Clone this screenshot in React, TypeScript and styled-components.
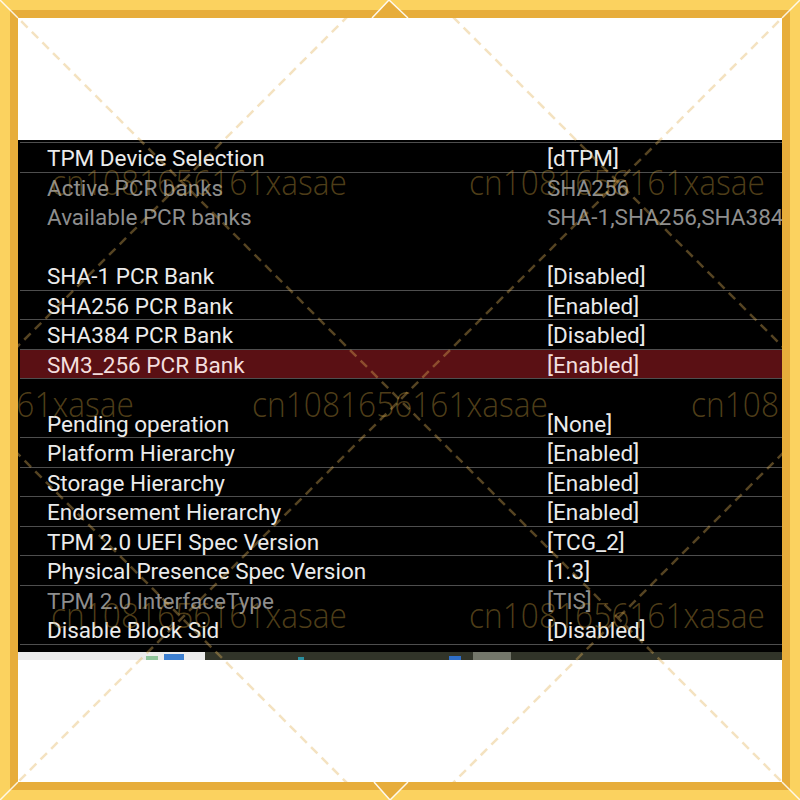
import styled, { createGlobalStyle } from 'styled-components';

type Kind = 'item' | 'info' | 'blank';

interface RowData {
  label?: string;
  value?: string;
  kind: Kind;
  active?: boolean;
}

const rows: RowData[] = [
  { label: 'TPM Device Selection', value: '[dTPM]', kind: 'item' },
  { label: 'Active PCR banks', value: 'SHA256', kind: 'info' },
  { label: 'Available PCR banks', value: 'SHA-1,SHA256,SHA384,SM3_256', kind: 'info' },
  { kind: 'blank' },
  { label: 'SHA-1 PCR Bank', value: '[Disabled]', kind: 'item' },
  { label: 'SHA256 PCR Bank', value: '[Enabled]', kind: 'item' },
  { label: 'SHA384 PCR Bank', value: '[Disabled]', kind: 'item' },
  { label: 'SM3_256 PCR Bank', value: '[Enabled]', kind: 'item', active: true },
  { kind: 'blank' },
  { label: 'Pending operation', value: '[None]', kind: 'item' },
  { label: 'Platform Hierarchy', value: '[Enabled]', kind: 'item' },
  { label: 'Storage Hierarchy', value: '[Enabled]', kind: 'item' },
  { label: 'Endorsement Hierarchy', value: '[Enabled]', kind: 'item' },
  { label: 'TPM 2.0 UEFI Spec Version', value: '[TCG_2]', kind: 'item' },
  { label: 'Physical Presence Spec Version', value: '[1.3]', kind: 'item' },
  { label: 'TPM 2.0 InterfaceType', value: '[TIS]', kind: 'info' },
  { label: 'Disable Block Sid', value: '[Disabled]', kind: 'item' },
];

// watermark text positions [x, baseline]
const marks: [number, number][] = [
  [51, 195],
  [469, 195],
  [-162, 417],
  [252, 417],
  [691, 417],
  [51, 628],
  [469, 628],
];

const GlobalStyle = createGlobalStyle`
  html, body {
    margin: 0;
    padding: 0;
    background: #ffffff;
  }
`;

const Page = styled.div`
  position: relative;
  width: 800px;
  height: 800px;
  overflow: hidden;
`;

const Frame = styled.div`
  width: 800px;
  height: 800px;
  box-sizing: border-box;
  border: 10px solid #fbd25f;
`;

const Inner = styled.div`
  height: 100%;
  box-sizing: border-box;
  border: 8px solid #e7ad3b;
  background: #ffffff;
  display: flex;
  flex-direction: column;
  overflow: hidden;
`;

const TopGap = styled.div`
  height: 122px;
  flex: none;
`;

const Panel = styled.div`
  height: 512px;
  flex: none;
  background: #000000;
  padding-top: 2px;
  box-sizing: border-box;
  font-family: Roboto, 'Liberation Sans', sans-serif;
  font-size: 22.5px;
`;

const List = styled.div`
  margin-left: 2px;
  border-top: 1.5px solid #4e4e4e;
`;

const Row = styled.div<{ $kind: Kind; $active?: boolean }>`
  height: 29.5px;
  box-sizing: border-box;
  display: grid;
  grid-template-columns: 500px 1fr;
  align-items: center;
  padding-left: 27px;
  padding-top: 2px;
  white-space: nowrap;
  overflow: hidden;
  background: ${(p) => (p.$active ? '#5a1014' : 'transparent')};
  border-bottom: 1.5px solid
    ${(p) => (p.$kind === 'item' ? '#4e4e4e' : 'transparent')};
  color: ${(p) => (p.$active ? '#f3dede' : p.$kind === 'info' ? '#8e8e8e' : '#ebebeb')};
`;

const Label = styled.span`
  overflow: hidden;
`;

const Value = styled.span`
  overflow: hidden;
`;

const Strip = styled.div`
  height: 8px;
  flex: none;
  display: flex;
`;

const StripLight = styled.div`
  width: 187px;
  background: #ebebeb;
  display: flex;
  align-items: flex-end;
  padding-left: 128px;
  gap: 6px;
  box-sizing: border-box;
`;

const StripDark = styled.div`
  flex: 1;
  background: #313429;
  display: flex;
  align-items: flex-end;
`;

const Chip = styled.span<{ $color: string; $w: number; $h: number; $ml?: number }>`
  display: block;
  width: ${(p) => p.$w}px;
  height: ${(p) => p.$h}px;
  background: ${(p) => p.$color};
  margin-left: ${(p) => p.$ml ?? 0}px;
`;

const Overlay = styled.svg`
  position: absolute;
  inset: 0;
  pointer-events: none;
`;

const dash = 'rgba(226,180,90,0.38)';

export default function App() {
  return (
    <>
      <GlobalStyle />
      <Page>
        <Frame>
          <Inner>
            <TopGap />
            <Panel>
              <List>
                {rows.map((r, i) => (
                  <Row key={i} $kind={r.kind} $active={r.active}>
                    <Label>{r.label ?? ''}</Label>
                    <Value>{r.value ?? ''}</Value>
                  </Row>
                ))}
              </List>
            </Panel>
            <Strip>
              <StripLight>
                <Chip $color="#8fc49a" $w={12} $h={4} />
                <Chip $color="#3d7fd0" $w={20} $h={6} />
              </StripLight>
              <StripDark>
                <Chip $color="#2a8fa0" $w={6} $h={3} $ml={93} />
                <Chip $color="#2f6fc8" $w={12} $h={4} $ml={145} />
                <Chip $color="#74776b" $w={38} $h={8} $ml={12} />
              </StripDark>
            </Strip>
          </Inner>
        </Frame>
        <Overlay width="800" height="800" viewBox="0 0 800 800">
          <defs>
            <clipPath id="innerClip">
              <rect x="18" y="18" width="764" height="764" />
            </clipPath>
          </defs>
          <g clipPath="url(#innerClip)">
            {marks.map(([x, y], i) => (
              <text
                key={i}
                x={x}
                y={y}
                textLength={296}
                lengthAdjust="spacingAndGlyphs"
                fontFamily="'Open Sans', 'DejaVu Sans', sans-serif"
                fontWeight={300}
                fontSize={35}
                fill="rgba(190,150,60,0.42)"
              >
                cn1081656161xasae
              </text>
            ))}
            <g stroke={dash} strokeWidth="2.5" strokeDasharray="9 6" fill="none">
              <line x1="0" y1="0" x2="800" y2="800" />
              <line x1="800" y1="0" x2="0" y2="800" />
              <polygon points="400,-36 836,400 400,836 -36,400" />
            </g>
          </g>
          <g stroke="rgba(255,255,255,0.85)" strokeWidth="1.5" fill="none">
            <line x1="0" y1="0" x2="18" y2="18" />
            <line x1="800" y1="0" x2="782" y2="18" />
            <line x1="0" y1="800" x2="18" y2="782" />
            <line x1="800" y1="800" x2="782" y2="782" />
          </g>
          <g stroke="rgba(255,255,255,0.9)" strokeWidth="1.5" fill="#e7ad3b">
            <polyline points="372,18 389,0 408,18" />
            <polyline points="374,782 390,800 408,782" />
          </g>
        </Overlay>
      </Page>
    </>
  );
}
